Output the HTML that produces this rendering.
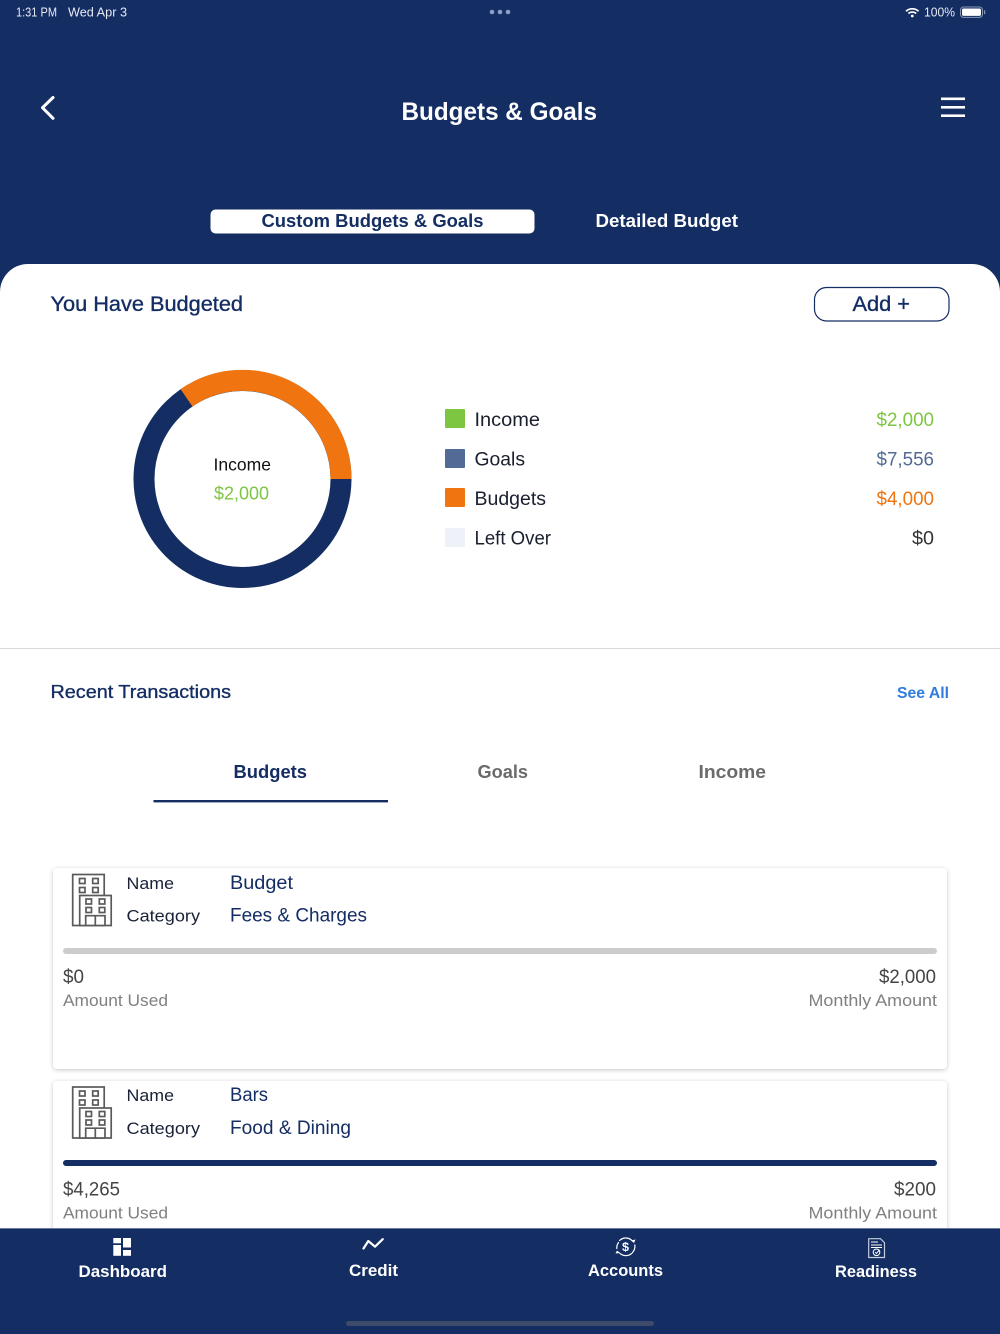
<!DOCTYPE html>
<html lang="en"><head><meta charset="utf-8"><title>Budgets &amp; Goals</title>
<style>
html,body{margin:0;padding:0;background:#142d63;width:1000px;height:1334px;overflow:hidden}
svg{display:block}
text{font-family:"Liberation Sans",sans-serif;white-space:pre}
.m{stroke-width:.35px;paint-order:stroke}
.b{font-weight:700}
</style></head><body>
<svg xmlns="http://www.w3.org/2000/svg" width="1000" height="1334" viewBox="0 0 1000 1334">
<defs>
<filter id="s" x="-3%" y="-5%" width="106%" height="110%"><feDropShadow dx="0" dy="1" stdDeviation="2" flood-color="#000" flood-opacity=".22"/></filter>
<g id="bld" fill="none" stroke="#5a5a5a" stroke-width="1.7">
<rect x="72.700" y="874.500" width="31.500" height="51"/>
<rect x="79.700" y="895.500" width="31.500" height="30" fill="#fff"/>
<rect x="79.500" y="878.500" width="5.500" height="5"/><rect x="92.700" y="878.500" width="5.500" height="5"/>
<rect x="79.500" y="887.500" width="5.500" height="5"/><rect x="92.700" y="887.500" width="5.500" height="5"/>
<rect x="86" y="899" width="5.500" height="5"/><rect x="99.300" y="899" width="5.500" height="5"/>
<rect x="86" y="907.500" width="5.500" height="5"/><rect x="99.300" y="907.500" width="5.500" height="5"/>
<path d="M85.700 925.500V915.700H105V925.500M95.300 915.700V925.500"/>
</g>
</defs>
<rect width="1000" height="1334" fill="#142d63"/>

<!-- status bar -->
<g fill="#e6e9f2" font-size="13">
<text x="16" y="16.500" textLength="41" lengthAdjust="spacingAndGlyphs">1:31 PM</text>
<text x="68" y="16.500" textLength="59" lengthAdjust="spacingAndGlyphs">Wed Apr 3</text>
<text x="924" y="16.500" textLength="31" lengthAdjust="spacingAndGlyphs">100%</text>
</g>
<g fill="#8c9ccb"><circle cx="492" cy="12" r="2.300"/><circle cx="500" cy="12" r="2.300"/><circle cx="508" cy="12" r="2.300"/></g>
<g fill="none" stroke="#fff" stroke-width="1.700">
<path d="M906 11.200A9.500 9.500 0 0 1 918.600 11.200"/><path d="M908.400 13.500A6 6 0 0 1 916.200 13.500"/>
</g>
<circle cx="912.300" cy="16" r="1.400" fill="#fff"/>
<rect x="960.500" y="7" width="22" height="10.400" rx="3" fill="none" stroke="#8a97b8" stroke-width="1"/>
<rect x="962" y="8.500" width="19" height="7.400" rx="1.600" fill="#fff"/>
<rect x="984" y="10.300" width="1.200" height="3.800" fill="#8a97b8"/>

<!-- header -->
<path d="M53 97.500L42.500 107.700L53 118.300" fill="none" stroke="#fff" stroke-width="3" stroke-linecap="round" stroke-linejoin="round"/>
<text x="401.500" y="120" font-size="25" class="b" fill="#fff" textLength="195.500" lengthAdjust="spacingAndGlyphs">Budgets &amp; Goals</text>
<g fill="#fff"><rect x="941" y="97.500" width="24" height="2.600"/><rect x="941" y="106" width="24" height="2.600"/><rect x="941" y="114.400" width="24" height="2.600"/></g>

<!-- segmented tabs -->
<rect x="210.500" y="209.500" width="324" height="24" rx="5" fill="#fff"/>
<text x="261.500" y="227" font-size="18" class="b" fill="#142d63" textLength="222" lengthAdjust="spacingAndGlyphs">Custom Budgets &amp; Goals</text>
<text x="595.500" y="227" font-size="18" class="b" fill="#fff" textLength="142.500" lengthAdjust="spacingAndGlyphs">Detailed Budget</text>

<!-- panel -->
<path d="M0 292A28 28 0 0 1 28 264H972A28 28 0 0 1 1000 292V1228H0Z" fill="#fff"/>
<text x="50.500" y="311" font-size="21" class="m" fill="#142d63" stroke="#142d63" textLength="192.500" lengthAdjust="spacingAndGlyphs">You Have Budgeted</text>
<rect x="814.500" y="287.500" width="134.500" height="33.500" rx="12" fill="#fff" stroke="#142d63" stroke-width="1.200"/>
<text x="852.500" y="311" font-size="21" class="m" fill="#142d63" stroke="#142d63" textLength="57.500" lengthAdjust="spacingAndGlyphs">Add +</text>

<!-- donut -->
<circle cx="242.500" cy="479" r="98.500" fill="none" stroke="#142d63" stroke-width="21"/>
<path d="M186.500 397.800A98.500 98.500 0 0 1 341 479" fill="none" stroke="#f07511" stroke-width="21"/>
<text x="213.500" y="470.500" font-size="17.500" fill="#111" textLength="57.500" lengthAdjust="spacingAndGlyphs">Income</text>
<text x="214" y="499.500" font-size="18" fill="#7dc642" textLength="55" lengthAdjust="spacingAndGlyphs">$2,000</text>

<!-- legend -->
<rect x="445" y="409" width="20" height="19" rx="1" fill="#7dc642"/>
<rect x="445" y="449" width="20" height="19" rx="1" fill="#546a96"/>
<rect x="445" y="488" width="20" height="19" rx="1" fill="#f07511"/>
<rect x="445" y="528" width="20" height="19" rx="1" fill="#eef1f7"/>
<g font-size="19" fill="#1a1f2e">
<text x="474.500" y="426" textLength="65.500" lengthAdjust="spacingAndGlyphs">Income</text>
<text x="474.500" y="465.500" textLength="50.500" lengthAdjust="spacingAndGlyphs">Goals</text>
<text x="474.500" y="505" textLength="71.500" lengthAdjust="spacingAndGlyphs">Budgets</text>
<text x="474.500" y="544.500" textLength="76.500" lengthAdjust="spacingAndGlyphs">Left Over</text>
</g>
<g font-size="19">
<text x="876.500" y="426" fill="#7dc642" textLength="57.500" lengthAdjust="spacingAndGlyphs">$2,000</text>
<text x="876.500" y="465.500" fill="#546a96" textLength="57.500" lengthAdjust="spacingAndGlyphs">$7,556</text>
<text x="876.500" y="505" fill="#f07511" textLength="57.500" lengthAdjust="spacingAndGlyphs">$4,000</text>
<text x="912" y="544.500" fill="#333" textLength="22" lengthAdjust="spacingAndGlyphs">$0</text>
</g>

<rect x="0" y="648" width="1000" height="1" fill="#d9d9d9"/>

<!-- recent -->
<text x="50.500" y="698" font-size="18" class="m" fill="#142d63" stroke="#142d63" textLength="180.500" lengthAdjust="spacingAndGlyphs">Recent Transactions</text>
<text x="897" y="698" font-size="15.500" class="b" fill="#2f7de1" textLength="52" lengthAdjust="spacingAndGlyphs">See All</text>
<text x="233.500" y="778" font-size="18" class="b" fill="#142d63" textLength="73.500" lengthAdjust="spacingAndGlyphs">Budgets</text>
<text x="477.500" y="778" font-size="18" class="b" fill="#6b6b6b" textLength="50.500" lengthAdjust="spacingAndGlyphs">Goals</text>
<text x="698.500" y="778" font-size="18" class="b" fill="#6b6b6b" textLength="67.500" lengthAdjust="spacingAndGlyphs">Income</text>
<rect x="153.500" y="800" width="234.500" height="2.400" fill="#142d63"/>

<!-- card 1 -->
<rect x="53" y="868" width="894" height="201" rx="4" fill="#fff" filter="url(#s)"/>
<use href="#bld"/>
<g font-size="17" fill="#1a2238">
<text x="126.500" y="889" textLength="47.500" lengthAdjust="spacingAndGlyphs">Name</text>
<text x="126.500" y="921.500" textLength="73.500" lengthAdjust="spacingAndGlyphs">Category</text>
</g>
<g font-size="19" fill="#142d63">
<text x="230" y="889" textLength="63" lengthAdjust="spacingAndGlyphs">Budget</text>
<text x="230" y="921.500" textLength="137" lengthAdjust="spacingAndGlyphs">Fees &amp; Charges</text>
</g>
<rect x="63" y="948" width="874" height="6" rx="3" fill="#cccccc"/>
<g font-size="19" fill="#444">
<text x="63" y="983" textLength="21" lengthAdjust="spacingAndGlyphs">$0</text>
<text x="879" y="983" textLength="57" lengthAdjust="spacingAndGlyphs">$2,000</text>
</g>
<g font-size="17" fill="#808080">
<text x="63" y="1006" textLength="105" lengthAdjust="spacingAndGlyphs">Amount Used</text>
<text x="808.500" y="1006" textLength="128.500" lengthAdjust="spacingAndGlyphs">Monthly Amount</text>
</g>

<!-- card 2 -->
<rect x="53" y="1081" width="894" height="201" rx="4" fill="#fff" filter="url(#s)"/>
<use href="#bld" y="212.500"/>
<g font-size="17" fill="#1a2238">
<text x="126.500" y="1101" textLength="47.500" lengthAdjust="spacingAndGlyphs">Name</text>
<text x="126.500" y="1134" textLength="73.500" lengthAdjust="spacingAndGlyphs">Category</text>
</g>
<g font-size="19" fill="#142d63">
<text x="230" y="1101" textLength="38" lengthAdjust="spacingAndGlyphs">Bars</text>
<text x="230" y="1134" textLength="121" lengthAdjust="spacingAndGlyphs">Food &amp; Dining</text>
</g>
<rect x="63" y="1160" width="874" height="6" rx="3" fill="#142d63"/>
<g font-size="19" fill="#444">
<text x="63" y="1195.500" textLength="57" lengthAdjust="spacingAndGlyphs">$4,265</text>
<text x="894" y="1195.500" textLength="42" lengthAdjust="spacingAndGlyphs">$200</text>
</g>
<g font-size="17" fill="#808080">
<text x="63" y="1218.500" textLength="105" lengthAdjust="spacingAndGlyphs">Amount Used</text>
<text x="808.500" y="1218.500" textLength="128.500" lengthAdjust="spacingAndGlyphs">Monthly Amount</text>
</g>

<!-- tab bar -->
<rect x="0" y="1228" width="1000" height="106" fill="#142d63"/>
<rect x="0" y="1228" width="1000" height="0.700" fill="#8f9bb5"/>
<g fill="#fff">
<rect x="113.300" y="1238" width="7.700" height="5.300"/><rect x="113.300" y="1245" width="7.700" height="10.800"/>
<rect x="123" y="1238" width="8" height="9.500"/><rect x="123" y="1250" width="8" height="5.800"/>
</g>
<path d="M363.500 1248.500L368.300 1241L375 1246.700L382.700 1239.200" fill="none" stroke="#fff" stroke-width="2.200" stroke-linecap="round" stroke-linejoin="round"/>
<g fill="none" stroke="#fff" stroke-width="1.200" stroke-linecap="round">
<path d="M619.500 1240.500A9 9 0 0 1 632 1240.500"/><path d="M634.800 1245A9 9 0 0 1 632.500 1252.500"/>
<path d="M632 1253.200A9 9 0 0 1 619.500 1253"/><path d="M616.800 1248.500A9 9 0 0 1 618.500 1242.500"/>
</g>
<path d="M631 1240.500L634 1243L635.500 1239.500Z M620 1253L617 1250.500L615.500 1253.500Z" fill="#fff"/>
<text x="622" y="1251" font-size="12" class="b" fill="#fff" textLength="7" lengthAdjust="spacingAndGlyphs">$</text>
<path d="M868.700 1238.700H880.500L884.500 1242.700V1257.500H868.700Z" fill="none" stroke="#c5cde0" stroke-width="1.200"/>
<path d="M871 1242H878M871 1245H882M871 1247.500H882" stroke="#fff" stroke-width="1.100" fill="none"/>
<circle cx="876.500" cy="1252.300" r="3.300" fill="none" stroke="#fff" stroke-width="1.100"/>
<path d="M875.200 1252.300L876.400 1253.400L879.500 1249.800" fill="none" stroke="#fff" stroke-width="1"/>
<g font-size="16.500" class="b" fill="#fff">
<text x="78.500" y="1277" textLength="88.500" lengthAdjust="spacingAndGlyphs">Dashboard</text>
<text x="349" y="1276" textLength="49" lengthAdjust="spacingAndGlyphs">Credit</text>
<text x="588" y="1276" textLength="75" lengthAdjust="spacingAndGlyphs">Accounts</text>
<text x="835" y="1277" textLength="82" lengthAdjust="spacingAndGlyphs">Readiness</text>
</g>
<rect x="346" y="1321" width="308" height="5" rx="2.500" fill="#3d4a69"/>
</svg>
</body></html>
